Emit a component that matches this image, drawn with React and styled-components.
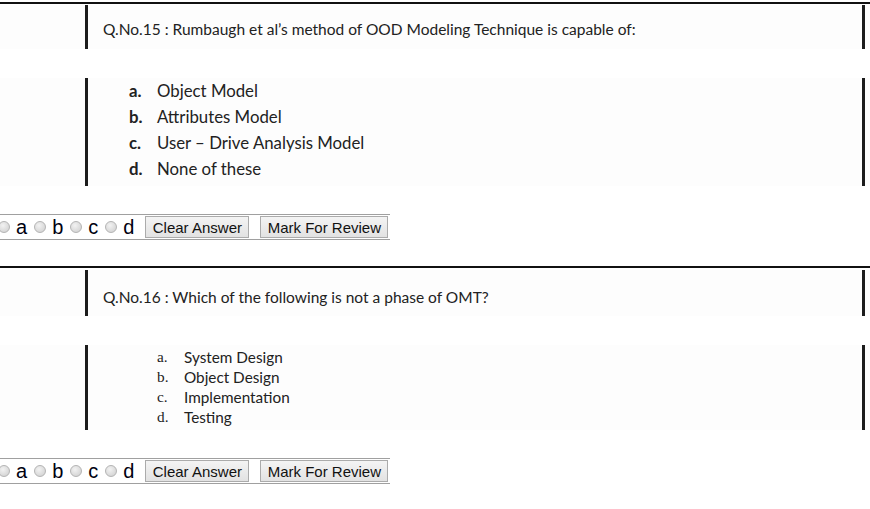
import React from "react";
import styled, { createGlobalStyle } from "styled-components";

const GlobalStyle = createGlobalStyle`
  html, body {
    margin: 0;
    padding: 0;
    background: #ffffff;
    overflow: hidden;
  }
  body {
    font-family: "Liberation Sans", Arial, sans-serif;
  }
`;

const questions = [
  {
    no: 15,
    text: "Rumbaugh et al\u2019s method of OOD Modeling Technique is capable of:",
    qHeight: 44,
    qTop: 13,
    qGap: 1,
    options: ["Object Model", "Attributes Model", "User \u2013 Drive Analysis Model", "None of these"],
    variant: "bold",
    oHeight: 108,
  },
  {
    no: 16,
    text: "Which of the following is not a phase of OMT?",
    qHeight: 46,
    qTop: 16,
    qGap: 2,
    options: ["System Design", "Object Design", "Implementation", "Testing"],
    variant: "serif",
    oHeight: 85,
  },
];

const App = () => {
  return (
    <Page>
      <GlobalStyle />
      {questions.map((q) => (
        <QuestionBlock key={q.no}>
          <Rule />
          <ScanStrip $gap={q.qGap}>
            <Frame $height={q.qHeight}>
              <QuestionText $top={q.qTop}>
                Q.No.{q.no} : {q.text}
              </QuestionText>
            </Frame>
          </ScanStrip>
          <ScanStrip $gap={29}>
            <Frame $height={q.oHeight}>
              <OptionList $variant={q.variant}>
                {q.options.map((opt, i) => (
                  <OptionRow key={opt} $variant={q.variant}>
                    <OptionLetter $variant={q.variant}>
                      {"abcd"[i]}.
                    </OptionLetter>
                    <span>{opt}</span>
                  </OptionRow>
                ))}
              </OptionList>
            </Frame>
          </ScanStrip>
          <AnswerRow>
            {["a", "b", "c", "d"].map((l) => (
              <Choice key={l}>
                <Radio type="radio" name={`q${q.no}`} value={l} />
                <ChoiceLabel>{l}</ChoiceLabel>
              </Choice>
            ))}
            <Button type="button" $width={104}>Clear Answer</Button>
            <Button type="button" $width={128}>Mark For Review</Button>
          </AnswerRow>
        </QuestionBlock>
      ))}
    </Page>
  );
};

export default App;

const Page = styled.div`
  width: 870px;
  padding-top: 2px;
`;

const QuestionBlock = styled.div`
  display: flex;
  flex-direction: column;
`;

const Rule = styled.div`
  height: 2px;
  background: #111111;
  width: 100%;
`;

const ScanStrip = styled.div`
  margin-top: ${(p) => p.$gap}px;
  background: #fdfdfd;
`;

const Frame = styled.div`
  box-sizing: border-box;
  margin-left: 85px;
  width: 780px;
  height: ${(p) => p.$height}px;
  border-left: 3px solid #1c1c1c;
  border-right: 3px solid #1c1c1c;
`;

const QuestionText = styled.div`
  padding: ${(p) => p.$top}px 0 0 15px;
  font-family: Lato, "Open Sans", sans-serif;
  font-size: 15.5px;
  line-height: 22px;
  color: #222222;
  white-space: nowrap;
`;

const OptionList = styled.div`
  display: flex;
  flex-direction: column;
  padding-left: ${(p) => (p.$variant === "bold" ? 41 : 69)}px;
  padding-top: ${(p) => (p.$variant === "bold" ? 0 : 2)}px;
`;

const OptionRow = styled.div`
  display: flex;
  font-family: Lato, "Open Sans", sans-serif;
  font-size: ${(p) => (p.$variant === "bold" ? 16.8 : 15.3)}px;
  line-height: ${(p) => (p.$variant === "bold" ? 26 : 20)}px;
  color: #222222;
  white-space: nowrap;
`;

const OptionLetter = styled.span`
  flex-shrink: 0;
  width: ${(p) => (p.$variant === "bold" ? 28 : 27)}px;
  font-weight: ${(p) => (p.$variant === "bold" ? 700 : 400)};
  font-family: ${(p) =>
    p.$variant === "bold"
      ? `Lato, "Open Sans", sans-serif`
      : `"Liberation Serif", "Times New Roman", serif`};
`;

const AnswerRow = styled.div`
  display: flex;
  align-items: center;
  box-sizing: border-box;
  width: 392px;
  height: 26px;
  margin: 28px 0 26px -2px;
  border-top: 1px solid #a0a0a0;
  border-bottom: 1px solid #a0a0a0;
`;

const Choice = styled.label`
  display: flex;
  align-items: center;
  gap: 6px;
  margin-right: 7px;
  flex-shrink: 0;
`;

const Radio = styled.input`
  appearance: none;
  margin: 0;
  width: 12px;
  height: 12px;
  border-radius: 50%;
  border: 1px solid #b4b4b4;
  background: radial-gradient(circle at 40% 35%, #f2f2f2 0%, #d8d8d8 70%, #c8c8c8 100%);
  box-sizing: border-box;
`;

const ChoiceLabel = styled.span`
  font-family: "Liberation Sans", Arial, sans-serif;
  font-size: 20px;
  line-height: 22px;
  color: #000010;
`;

const Button = styled.button`
  flex-shrink: 0;
  white-space: nowrap;
  box-sizing: border-box;
  width: ${(p) => p.$width}px;
  height: 22px;
  padding: 0;
  margin-left: 4px;
  margin-right: 7px;
  font-family: "Liberation Sans", Arial, sans-serif;
  font-size: 15px;
  color: #111111;
  background: linear-gradient(#f4f4f4, #e2e2e2);
  border: 1px solid #ababab;
  border-radius: 0;
  &:last-child {
    margin-right: 0;
  }
`;
